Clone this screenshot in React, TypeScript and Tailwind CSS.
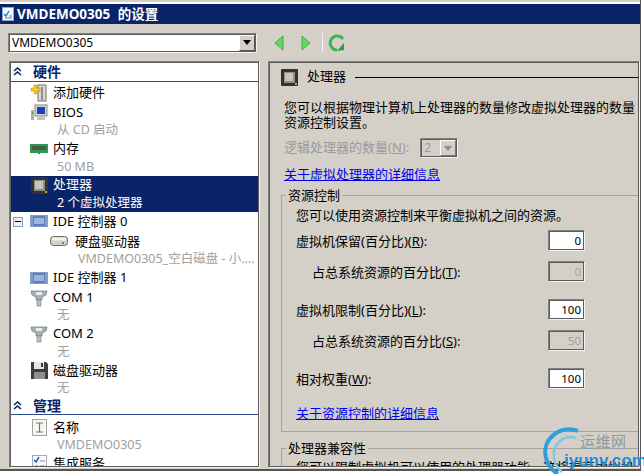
import * as React from "react";

const FONT = "font-['Noto_Sans','Noto_Sans_CJK_SC',sans-serif]";
const SUNKEN = "border border-t-[#808080] border-l-[#808080] border-r-[#f4f3ef] border-b-[#f4f3ef] outline outline-1 -outline-offset-2 outline-[#5c5c5c]";

/* Small hand drawn icons for the hardware tree */
function CpuIcon({ size = 17 }: { size?: number }) {
  return (
    <svg width={size} height={size} viewBox="0 0 17 17" className="shrink-0">
      <rect x="0" y="0" width="17" height="17" fill="#33322e" rx="1" />
      <rect x="3" y="3" width="11" height="11" fill="#8f8f8a" />
      <rect x="4" y="4" width="8" height="8" fill="#c4c4c0" />
      <rect x="14" y="14" width="2" height="2" fill="#e09a20" />
    </svg>
  );
}

function AddIcon() {
  return (
    <svg width="18" height="18" viewBox="0 0 18 18">
      <rect x="8" y="1" width="8" height="16" fill="#d8d8d4" stroke="#77776f" />
      <rect x="11" y="3" width="2" height="13" fill="#8f8f88" />
      <path d="M4 1h3v3h3v3H7v3H4V7H1V4h3z" fill="#f2c62c" stroke="#b08a10" strokeWidth="0.5" />
    </svg>
  );
}

function BiosIcon() {
  return (
    <svg width="18" height="18" viewBox="0 0 18 18">
      <rect x="5" y="1" width="12" height="11" fill="#d4d4d0" stroke="#888" />
      <rect x="7" y="3" width="8" height="7" fill="#1c3fc0" />
      <rect x="1" y="6" width="3" height="10" fill="#b0b0aa" />
      <rect x="2" y="8" width="1" height="2" fill="#38a838" />
      <rect x="7" y="13" width="8" height="3" fill="#c4c4bf" />
    </svg>
  );
}

function MemoryIcon() {
  return (
    <svg width="18" height="14" viewBox="0 0 18 14">
      <rect x="0" y="2" width="18" height="9" fill="#2c9a4c" />
      <rect x="2" y="4" width="14" height="4" fill="#23302a" />
      <path d="M3 4v4M5 4v4M7 4v4M9 4v4M11 4v4M13 4v4M15 4v4" stroke="#9aa59e" strokeWidth="0.7" />
      <rect x="8" y="11" width="2" height="1" fill="#2c9a4c" />
    </svg>
  );
}

function IdeIcon() {
  return (
    <svg width="18" height="14" viewBox="0 0 18 14">
      <rect x="0" y="1" width="18" height="12" fill="#7f9fd0" />
      <rect x="3" y="2" width="12" height="10" fill="#5f7fb4" />
      <rect x="4" y="4" width="10" height="6" fill="#9db5dc" />
    </svg>
  );
}

function DiskIcon() {
  return (
    <svg width="18" height="12" viewBox="0 0 18 12">
      <rect x="0.5" y="1.5" width="17" height="9" rx="3" fill="#d0d0cc" stroke="#6b6b66" />
      <rect x="2" y="2.5" width="14" height="3" rx="1" fill="#f0f0ee" />
      <rect x="12" y="7" width="2" height="2" fill="#38b038" />
    </svg>
  );
}

function ComIcon() {
  return (
    <svg width="18" height="18" viewBox="0 0 18 18">
      <path d="M1 2h16l-1 4-4 2v3H6V8L2 6z" fill="#a9afb3" stroke="#6f767a" strokeWidth="0.7" />
      <rect x="6" y="3" width="6" height="3" fill="#e8ecee" />
      <rect x="7" y="11" width="4" height="6" fill="#b7bdc0" stroke="#7b8286" strokeWidth="0.6" />
    </svg>
  );
}

function FloppyIcon() {
  return (
    <svg width="17" height="17" viewBox="0 0 17 17">
      <path d="M0 0h15l2 2v15H0z" fill="#3b3d40" />
      <rect x="3" y="0" width="10" height="7" fill="#e4e4e0" />
      <rect x="10" y="1" width="2" height="4" fill="#3b3d40" />
      <rect x="3" y="10" width="11" height="7" fill="#8d8f91" />
    </svg>
  );
}

function NameIcon() {
  return (
    <svg width="15" height="17" viewBox="0 0 15 17">
      <rect x="0.5" y="0.5" width="14" height="16" fill="#f6f6f4" stroke="#a5a5a0" />
      <path d="M4 4h7M4 13h7M7.5 4v9" stroke="#77776f" strokeWidth="1.2" fill="none" />
    </svg>
  );
}

function ServicesIcon() {
  return (
    <svg width="15" height="18" viewBox="0 0 15 18">
      <rect x="0.5" y="0.5" width="14" height="17" fill="#fafafa" stroke="#a8a8b0" />
      <path d="M2 5l2 2 3-5" stroke="#1d5fd0" strokeWidth="1.5" fill="none" />
      <path d="M8 6h5M8 11h5M3 11h3M3 15h10" stroke="#8a8a90" />
    </svg>
  );
}

function SectionHeader({ title, className }: { title: string; className: string }) {
  return (
    <div className={`flex items-center border-b border-[#2f4a8c] pl-[3px] ${className}`}>
      <svg width="9" height="9" viewBox="0 0 9 9" className="shrink-0">
        <path d="M1 4l3.5-3L8 4M1 8l3.5-3L8 8" stroke="#0a246a" strokeWidth="1.6" fill="none" />
      </svg>
      <span className="ml-[11px] text-[14px] font-bold text-[#0a246a]">{title}</span>
    </div>
  );
}

function TreeItem({
  icon,
  title,
  sub,
  selected,
}: {
  icon: React.ReactNode;
  title: string;
  sub?: string;
  selected?: boolean;
}) {
  return (
    <div className={`flex pl-[20px] ${sub ? "" : "pb-px"} ${selected ? "bg-[#0a246a] text-white" : "text-black"}`}>
      <div className="flex h-[19px] w-[18px] shrink-0 items-center justify-center">{icon}</div>
      <div className="min-w-0 pl-[5px]">
        <div className="flex h-[19px] items-center text-[13px] whitespace-nowrap">{title}</div>
        {sub ? (
          <div className={`flex h-[17.3px] items-center pl-[4px] text-[12.5px] whitespace-nowrap ${selected ? "text-white" : "text-[#a0a0a0]"}`}>
            {sub}
          </div>
        ) : null}
      </div>
    </div>
  );
}

function NumberField({ value, disabled }: { value: string; disabled?: boolean }) {
  return (
    <div
      className={`flex h-[21px] w-[37px] items-center justify-end pr-[3px] text-[11.5px] ${SUNKEN} ${
        disabled ? "bg-[#d4d0c8] text-[#a0a0a0]" : "bg-white text-black"
      }`}
    >
      {value}
    </div>
  );
}

function FieldRow({
  label,
  hotkey,
  value,
  disabled,
  className,
}: {
  label: string;
  hotkey: string;
  value: string;
  disabled?: boolean;
  className?: string;
}) {
  return (
    <div className={`flex h-[21px] items-center justify-between ${className ?? ""}`}>
      <span className={`pt-[3px] text-[13px] ${disabled ? "pl-[16px]" : ""}`}>
        {label}(<u>{hotkey}</u>):
      </span>
      <NumberField value={value} disabled={disabled} />
    </div>
  );
}

function Watermark() {
  return (
    <div className="absolute top-[426px] left-[537px] h-[48px] w-[107px]">
      <svg width="50" height="48" viewBox="0 0 50 48" className="absolute top-0 left-[3px]">
        <path d="M38 5C20-2 1 14 6 32c2 8 7 13 12 16" stroke="#2f9fdc" strokeWidth="4" fill="none" />
        <path d="M36 12C24 8 12 18 14 32c1 6 4 11 8 14" stroke="#7cc6ea" strokeWidth="2.5" fill="none" />
      </svg>
      <span className="absolute top-[7px] left-[43px] text-[15px] leading-[16px] tracking-[0.5px] whitespace-nowrap text-[#8a9aa3]">运维网</span>
      <span className="absolute top-[26px] left-[27px] font-['Liberation_Sans',sans-serif] text-[17px] leading-[18px] font-bold whitespace-nowrap text-[#1d8fd8]">
        iyunv.com
      </span>
    </div>
  );
}

export default function App() {
  return (
    <div className={`relative h-[474px] w-[644px] overflow-hidden bg-white ${FONT}`}>
      <div className="flex h-[471px] w-[641px] flex-col border-r border-b-2 border-[#555] bg-[#d4d0c8] pt-[2px]">
        <div className="flex h-[22px] shrink-0 items-center gap-[3px] border-t-2 border-white bg-[#0a246a] pl-[2px]">
          <svg width="12" height="14" viewBox="0 0 12 14" className="shrink-0">
            <rect x="0.5" y="0.5" width="11" height="13" fill="#f4f8fc" stroke="#8fa8c8" />
            <path d="M2 7l2 2 3-5" stroke="#2878d0" strokeWidth="1.4" fill="none" />
            <path d="M7 9h3M3 11h7" stroke="#808890" />
          </svg>
          <span className="text-[13.5px] font-bold whitespace-nowrap text-white [word-spacing:4px]">VMDEMO0305 的设置</span>
        </div>

        <div className="flex h-[37px] shrink-0 items-center">
          <div className={`ml-[8px] flex h-[20px] w-[249px] items-center justify-between bg-white pl-[3px] text-[12px] ${SUNKEN}`}>
            <span>VMDEMO0305</span>
            <div className="mr-[1px] flex h-[16px] w-[16px] items-center justify-center border border-t-white border-l-white border-r-[#555] border-b-[#555] bg-[#d4d0c8]">
              <svg width="8" height="5" viewBox="0 0 8 5"><path d="M0 0h8L4 5z" fill="#000" /></svg>
            </div>
          </div>
          <div className="ml-[17px] flex items-center">
            <svg width="10" height="16" viewBox="0 0 10 16"><path d="M9 1v14L1 8z" fill="#63d863" stroke="#3cae3c" /></svg>
            <svg width="10" height="16" viewBox="0 0 10 16" className="ml-[17px]"><path d="M1 1v14l8-7z" fill="#63d863" stroke="#3cae3c" /></svg>
            <div className="ml-[11px] h-[19px] w-px bg-[#f4f3ef]" />
            <svg width="18" height="18" viewBox="0 0 18 18" className="ml-[5px]">
              <path d="M15 5A7 7 0 1 0 9 16" stroke="#3cb54a" strokeWidth="3" fill="none" />
              <path d="M9 17l7-1V9z" fill="#2e9a3c" />
            </svg>
          </div>
        </div>

        <div className="flex min-h-0 flex-1 pb-px">
          <div className={`ml-[9px] w-[251px] shrink-0 overflow-hidden bg-white ${SUNKEN}`}>
            <SectionHeader title="硬件" className="h-[20px]" />
            <div className="h-px" />
            <TreeItem icon={<AddIcon />} title="添加硬件" />
            <TreeItem icon={<BiosIcon />} title="BIOS" sub="从 CD 启动" />
            <TreeItem icon={<MemoryIcon />} title="内存" sub="50 MB" />
            <TreeItem icon={<CpuIcon />} title="处理器" sub="2 个虚拟处理器" selected />
            <div className="relative">
              <div className="absolute top-[5px] left-[3px] flex h-[10px] w-[10px] items-center justify-center border border-[#8ea0c0] bg-[#eef0f4]">
                <div className="h-px w-[6px] bg-black" />
              </div>
              <TreeItem icon={<IdeIcon />} title="IDE 控制器 0" />
            </div>
            <div className="flex pl-[40px]">
              <div className="flex h-[19px] w-[18px] shrink-0 items-center justify-center"><DiskIcon /></div>
              <div className="min-w-0 pl-[7px]">
                <div className="flex h-[19px] items-center text-[13px]">硬盘驱动器</div>
                <div className="flex h-[17.3px] items-center pl-[3px] text-[12.5px] whitespace-nowrap text-[#a0a0a0]">VMDEMO0305_空白磁盘 - 小....</div>
              </div>
            </div>
            <TreeItem icon={<IdeIcon />} title="IDE 控制器 1" />
            <TreeItem icon={<ComIcon />} title="COM 1" sub="无" />
            <TreeItem icon={<ComIcon />} title="COM 2" sub="无" />
            <TreeItem icon={<FloppyIcon />} title="磁盘驱动器" sub="无" />
            <SectionHeader title="管理" className="h-[18px]" />
            <div className="h-[3px]" />
            <TreeItem icon={<NameIcon />} title="名称" sub="VMDEMO0305" />
            <TreeItem icon={<ServicesIcon />} title="集成服务" />
          </div>

          <div className={`ml-[8px] min-w-0 flex-1 overflow-hidden bg-[#d4d0c8] text-black ${SUNKEN}`}>
            <div className="w-[420px] pt-[6px] pl-[12px]">
              <div className="flex h-[18px] items-center">
                <CpuIcon />
                <span className="ml-[9px] text-[13px] whitespace-nowrap">处理器</span>
                <div className="ml-[9px] h-px flex-1 bg-black" />
              </div>
              <p className="mt-[14px] pl-[3px] text-[13px] leading-[15px] whitespace-nowrap">
                您可以根据物理计算机上处理器的数量修改虚拟处理器的数量
                <br />
                资源控制设置。
              </p>
              <div className="mt-[7px] flex h-[22px] items-center pl-[3px] text-[#9a9a9a]">
                <span className="text-[13px] whitespace-nowrap">逻辑处理器的数量(<u>N</u>):</span>
                <div className={`ml-[11px] flex h-[20px] w-[38px] items-center justify-between bg-[#d4d0c8] pl-[3px] text-[12px] ${SUNKEN}`}>
                  <span>2</span>
                  <div className="mr-[1px] flex h-[16px] w-[16px] items-center justify-center border border-t-white border-l-white border-r-[#777] border-b-[#777]">
                    <svg width="8" height="5" viewBox="0 0 8 5"><path d="M0 0h8L4 5z" fill="#8a8a8a" /></svg>
                  </div>
                </div>
              </div>
              <div className="mt-[7px] pl-[3px] text-[13px] leading-[16px] text-[#0000ee] underline">关于虚拟处理器的详细信息</div>

              <div className="mt-[13px] border border-r-0 border-[#a5a39c] pt-[12px] pr-[104px] pb-[10px] pl-[14px]">
                <div className="-mt-[21px] -ml-[10px] w-fit bg-[#d4d0c8] px-[2px] text-[13px] leading-[17px]">资源控制</div>
                <div className="mt-[3px] text-[13px] leading-[16px] whitespace-nowrap">您可以使用资源控制来平衡虚拟机之间的资源。</div>
                <div className="mt-[7px] flex flex-col">
                  <FieldRow label="虚拟机保留(百分比)" hotkey="R" value="0" />
                  <FieldRow label="占总系统资源的百分比" hotkey="T" value="0" disabled className="mt-[10px]" />
                  <FieldRow label="虚拟机限制(百分比)" hotkey="L" value="100" className="mt-[17px]" />
                  <FieldRow label="占总系统资源的百分比" hotkey="S" value="50" disabled className="mt-[10px]" />
                  <FieldRow label="相对权重" hotkey="W" value="100" className="mt-[17px]" />
                </div>
                <div className="mt-[16px] text-[13px] leading-[16px] text-[#0000ee] underline">关于资源控制的详细信息</div>
              </div>

              <div className="mt-[16px] border border-r-0 border-[#a5a39c] pl-[14px]">
                <div className="-mt-[9px] -ml-[10px] w-fit bg-[#d4d0c8] px-[2px] text-[13px] leading-[17px]">处理器兼容性</div>
                <div className="mt-[2px] text-[13px] leading-[16px] whitespace-nowrap">您可以限制虚拟机可以使用的处理器功能。这将提高虚拟机</div>
              </div>
            </div>
          </div>
        </div>
      </div>
      <Watermark />
    </div>
  );
}
